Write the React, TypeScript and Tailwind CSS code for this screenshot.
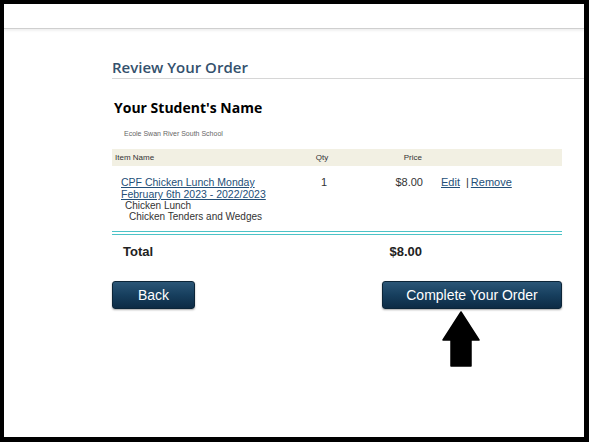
import React from 'react';

const items = [
    {
        id: 1,
        name: ['CPF Chicken Lunch Monday', 'February 6th 2023 - 2022/2023'],
        options: ['Chicken Lunch', 'Chicken Tenders and Wedges'],
        qty: 1,
        price: 8,
    },
];

const btn =
    'h-[28px] rounded-[3px] border border-[#0c2538] bg-gradient-to-b from-[#2b5677] via-[#173f5e] to-[#0d2b45] text-[14px] text-white shadow-[0_1px_2px_rgba(0,0,0,0.35)] font-["Liberation_Sans",Arial,sans-serif]';

const App: React.FC = () => {
    const total = items.reduce((s, i) => s + i.qty * i.price, 0);

    return (
        <div className="w-[589px] h-[442px] bg-black pt-[4px] pr-[5px] pb-[5px] pl-[4px]">
            <div className="h-full bg-white overflow-hidden">
                {/* top bar */}
                <div className="h-[25px] border-b border-[#cfcfcf] shadow-[0_2px_2px_rgba(0,0,0,0.06)]" />

                <div className="pl-[108px] pt-[28px]">
                    <h2 className="text-[15px] leading-[20px] font-semibold text-[#34516d] border-b border-[#d6d6d6] pb-[1px] font-['Open_Sans',sans-serif]">
                        Review Your Order
                    </h2>

                    <div className="w-[450px]">
                        <h3 className="mt-[19px] ml-[2px] text-[14px] leading-[20px] font-bold text-black font-['Open_Sans',sans-serif]">
                            Your Student's Name
                        </h3>
                        <p className="mt-[11px] ml-[12px] text-[7px] leading-[10px] text-[#666] font-['Liberation_Sans',Arial,sans-serif]">
                            Ecole Swan River South School
                        </p>

                        <table className="mt-[10px] w-[450px] border-collapse font-['Liberation_Sans',Arial,sans-serif]">
                            <thead>
                                <tr className="h-[17px] bg-[#f2f0e3] text-[8px] text-[#333]">
                                    <th className="w-[200px] pl-[3px] text-left font-normal">Item Name</th>
                                    <th className="w-[20px] text-center font-normal">Qty</th>
                                    <th className="w-[91px] text-right font-normal pr-[1px]">Price</th>
                                    <th className="font-normal" />
                                </tr>
                            </thead>
                            <tbody>
                                {items.map(item => (
                                    <tr key={item.id} className="align-top border-b-[4px] border-double border-[#4cc3c7]">
                                        <td className="pl-[9px] pt-[10px] pb-[9px] text-[10.5px] leading-[12px]">
                                            {item.name.map(n => (
                                                <div key={n}>
                                                    <a href="#" className="text-[#234f78] underline whitespace-nowrap">
                                                        {n}
                                                    </a>
                                                </div>
                                            ))}
                                            <div className="pl-[4px] text-[10px] leading-[11px] text-[#333]">
                                                <div>{item.options[0]}</div>
                                                <div className="pl-[4px]">{item.options[1]}</div>
                                            </div>
                                        </td>
                                        <td className="pt-[10px] text-center pl-[4px] text-[11px] leading-[12px] text-[#333]">{item.qty}</td>
                                        <td className="pt-[10px] text-right text-[11px] leading-[12px] text-[#333]">
                                            ${item.price.toFixed(2)}
                                        </td>
                                        <td className="pt-[10px] pl-[18px] text-[11px] leading-[12px] text-[#333] whitespace-nowrap">
                                            <a href="#" className="text-[#234f78] underline">Edit</a>
                                            <span className="ml-[6px] mr-[2px]">|</span>
                                            <a href="#" className="text-[#234f78] underline">Remove</a>
                                        </td>
                                    </tr>
                                ))}
                                <tr className="h-[34px] text-[13px] font-bold text-[#222]">
                                    <td className="pl-[11px] pt-[2px]">Total</td>
                                    <td />
                                    <td className="text-right pt-[2px] pr-[1px]">${total.toFixed(2)}</td>
                                    <td />
                                </tr>
                            </tbody>
                        </table>

                        <div className="mt-[14px] flex justify-between">
                            <button className={`${btn} w-[83px]`}>Back</button>
                            <button className={`${btn} w-[180px]`}>Complete Your Order</button>
                        </div>

                        <div className="ml-[330px] mt-[2px]">
                            <svg width="40" height="57" viewBox="0 0 40 57">
                                <path
                                    d="M19 1 L37 29 L29 29 L29 55 L9 55 L9 29 L1 29 Z"
                                    fill="#000"
                                    stroke="#000"
                                    strokeWidth="1.5"
                                    strokeLinejoin="round"
                                />
                            </svg>
                        </div>
                    </div>
                </div>
            </div>
        </div>
    );
};

export default App;
